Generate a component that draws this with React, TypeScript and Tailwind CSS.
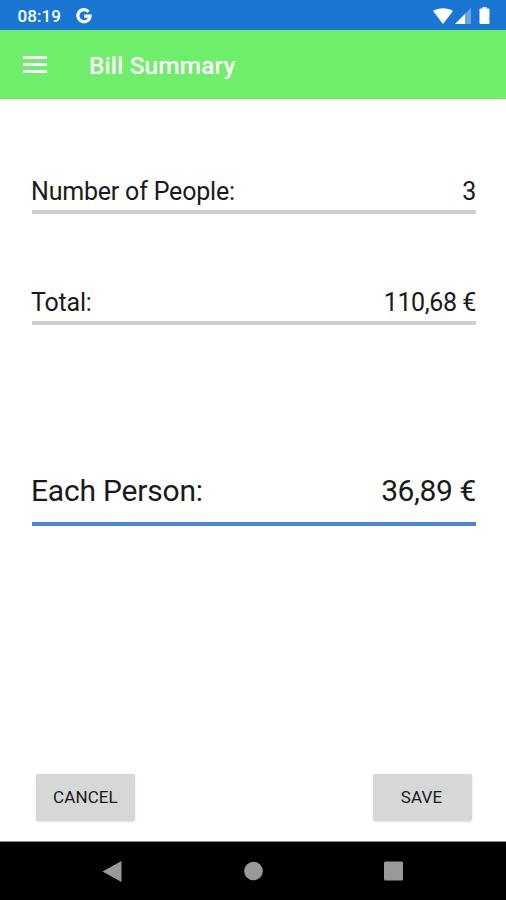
type Row = {
  label: string
  value: string
}

const rows: Row[] = [
  { label: 'Number of People:', value: '3' },
  { label: 'Total:', value: '110,68 €' },
]

function StatusBar() {
  return (
    <div className="flex h-[30px] items-center bg-[#1976d2] pl-[17.5px] pr-4 pt-px text-white">
      <span className="pt-px text-[17px] font-medium leading-none tracking-[0.1px]">08:19</span>
      <svg className="ml-[15px]" width="16" height="16" viewBox="0 0 16 16" fill="none" stroke="currentColor" strokeWidth="3.2">
        <path d="M12.6 3.7A6.1 6.1 0 1 0 14.1 8.1H8.2" />
      </svg>
      <div className="ml-auto flex items-center">
        <svg width="20" height="16" viewBox="0 0 20 16" fill="currentColor">
          <path d="M0 3C6-.8 14-.8 20 3L10 16Z" />
        </svg>
        <svg className="ml-[2px]" width="16" height="16" viewBox="0 0 16 16" fill="currentColor">
          <path d="M16 0V16H0Z" opacity="0.35" />
          <path d="M10 6V16H0Z" />
        </svg>
        <svg className="ml-[8px]" width="11" height="17" viewBox="0 0 11 17" fill="currentColor">
          <path d="M3.500 0h4v1.500h2a1 1 0 0 1 1 1V16a1 1 0 0 1-1 1h-8a1 1 0 0 1-1-1V2.500a1 1 0 0 1 1-1h2Z" />
        </svg>
      </div>
    </div>
  )
}

function AppBar() {
  return (
    <header className="flex h-[69px] items-center bg-[#6eee6a] pl-[23px] text-white">
      <button aria-label="Menu">
        <svg width="24" height="17" viewBox="0 0 24 17" fill="currentColor">
          <path d="M0 0h24v3H0zM0 7h24v3H0zM0 14h24v3H0z" />
        </svg>
      </button>
      <h1 className="ml-[42px] pt-1 text-[24.5px] font-medium leading-none tracking-[0.08px]">Bill Summary</h1>
    </header>
  )
}

function NavBar() {
  return (
    <nav className="flex h-[59px] items-center border-t border-[#8a8a8a] bg-black pl-[102px] text-[#999999]">
      <svg width="20" height="21" viewBox="0 0 20 21" fill="currentColor">
        <path d="M19.500 0V21L.5 10.500Z" />
      </svg>
      <svg className="ml-[122px]" width="20" height="20" viewBox="0 0 20 20" fill="currentColor">
        <circle cx="9.500" cy="10" r="9.300" />
      </svg>
      <svg className="ml-[120px]" width="20" height="20" viewBox="0 0 20 20" fill="currentColor">
        <rect width="19" height="19" y="0.500" rx="1.500" />
      </svg>
    </nav>
  )
}

export default function App() {
  return (
    <div className="flex h-[900px] w-[506px] flex-col bg-white font-['Roboto',sans-serif] text-[#1a1a1a]">
      <StatusBar />
      <AppBar />
      <main className="flex flex-1 flex-col pl-8 pr-[30px] pt-[67px]">
        {rows.map((row) => (
          <div
            key={row.label}
            className="mb-[63px] flex h-[48px] items-center justify-between border-b-4 border-[#cecece] pt-1.5 text-[25px] leading-none"
          >
            <span className="-ml-px tracking-[-0.2px]">{row.label}</span>
            <span className="tracking-[-0.4px]">{row.value}</span>
          </div>
        ))}
        <div className="mt-[79px] flex h-[59px] items-center justify-between border-b-4 border-[#4a87dd] pb-[7px] text-[30px] leading-none">
          <span className="-ml-px tracking-[-0.2px]">Each Person:</span>
          <span className="tracking-[-0.4px]">36,89 €</span>
        </div>
        <div className="mb-5 mt-auto flex justify-between px-1">
          <button className="h-[47px] w-[99px] rounded-[2px] bg-[#d6d7d7] text-[17px] tracking-[0.1px] shadow-sm">CANCEL</button>
          <button className="h-[47px] w-[99px] rounded-[2px] bg-[#d6d7d7] pr-0.5 text-[17px] tracking-[0.2px] shadow-sm">SAVE</button>
        </div>
      </main>
      <NavBar />
    </div>
  )
}
